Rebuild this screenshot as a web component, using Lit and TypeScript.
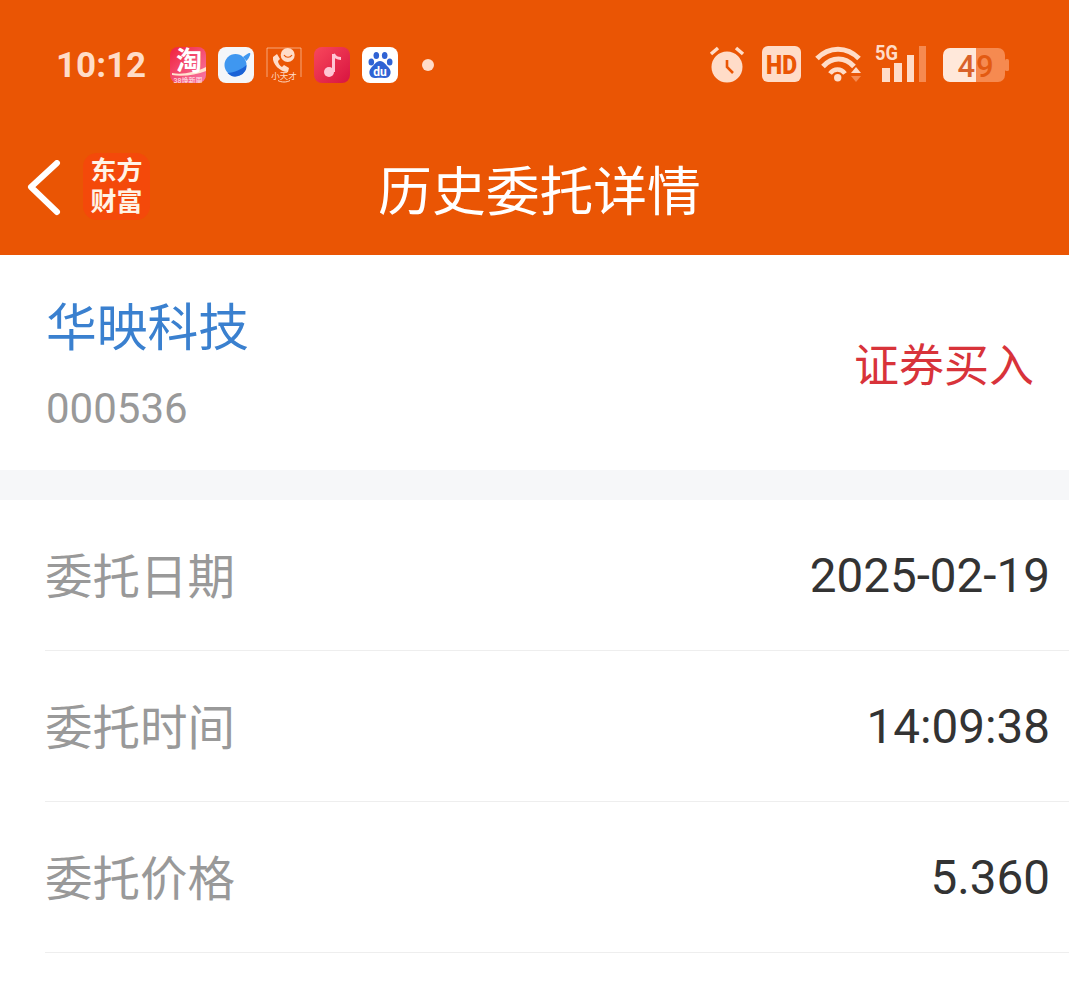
import { css, html, LitElement } from 'lit'
import { customElement } from 'lit/decorators.js'

const rows = [
  { label: '委托日期', value: '2025-02-19' },
  { label: '委托时间', value: '14:09:38' },
  { label: '委托价格', value: '5.360' },
]

@customElement('app-root')
export class AppRoot extends LitElement {
  static styles = css`
    :host {
      display: block;
      width: 1069px;
      height: 995px;
      overflow: hidden;
      background: #fff;
      font-family: Roboto, 'Noto Sans CJK SC', sans-serif;
    }
    .header {
      background: #ea5504;
      height: 255px;
      display: flex;
      flex-direction: column;
    }
    .status {
      height: 130px;
      display: flex;
      align-items: center;
      padding: 0 58px 0 56px;
      color: #ffdcc8;
    }
    .time {
      font-size: 35px;
      font-weight: 700;
      width: 114px;
    }
    .apps {
      display: flex;
      gap: 12px;
      align-items: center;
    }
    .app {
      width: 36px;
      height: 36px;
      display: block;
    }
    .dot {
      width: 12px;
      height: 12px;
      border-radius: 50%;
      background: #ffdcc8;
      margin-left: 24px;
    }
    .sys {
      margin-left: auto;
    }
    .sys svg {
      display: block;
    }
    .sys text {
      font-family: Roboto, sans-serif;
    }
    .nav {
      flex: 1;
      position: relative;
      display: flex;
      align-items: center;
      justify-content: center;
      padding: 0 0 11px 10px;
    }
    .title {
      color: #fff;
      font-size: 53.8px;
    }
    .back {
      position: absolute;
      left: 26px;
      top: 30px;
    }
    .logo {
      position: absolute;
      left: 83px;
      top: 23px;
      width: 67px;
      height: 67px;
      border-radius: 14px;
      background: #f4490a;
      color: #fff3e6;
      font-size: 26px;
      font-weight: 700;
      line-height: 31px;
      display: flex;
      flex-direction: column;
      align-items: center;
      justify-content: center;
    }
    .stock {
      height: 215px;
      display: flex;
      align-items: center;
      justify-content: space-between;
      padding: 0 35px 0 46px;
    }
    .info {
      padding-top: 7px;
    }
    .name {
      font-size: 50.75px;
      line-height: 60px;
      color: #3a80cf;
    }
    .code {
      font-size: 42px;
      line-height: 50px;
      color: #999;
      margin-top: 25px;
    }
    .side {
      font-size: 45px;
      color: #d8333a;
    }
    .gap {
      height: 30px;
      background: #f6f7f9;
    }
    .row {
      height: 150px;
      margin-left: 45px;
      padding-right: 20px;
      display: flex;
      align-items: center;
      justify-content: space-between;
      border-bottom: 1px solid #eeeeee;
    }
    .label {
      font-size: 47.5px;
      color: #999;
      padding-bottom: 4px;
    }
    .value {
      font-size: 47.6px;
      color: #333;
      padding-top: 2px;
      margin-right: -1px;
    }
  `

  render() {
    return html`
      <div class="header">
        <div class="status">
          <span class="time">10:12</span>
          <div class="apps">
            <svg class="app" viewBox="0 0 36 36">
              <defs>
                <linearGradient id="tb" x1="0" y1="0" x2="1" y2="1">
                  <stop offset="0" stop-color="#f0213c" />
                  <stop offset="1" stop-color="#f87aa8" />
                </linearGradient>
              </defs>
              <rect width="36" height="36" rx="8" fill="url(#tb)" />
              <path d="M2 26 C12 28 26 25 36 20 V24 C26 28 12 30 2 28Z" fill="#ffe4d0" />
              <text x="19" y="23" text-anchor="middle" font-size="26" font-weight="700" fill="#fff">淘</text>
              <text x="18" y="35.5" text-anchor="middle" font-size="7" fill="#ffe8ec">38焕新周</text>
            </svg>
            <svg class="app" viewBox="0 0 36 36">
              <rect width="36" height="36" rx="8" fill="#f4f6f9" />
              <circle cx="17.5" cy="18" r="11" fill="#3f97f0" />
              <path d="M9.5 26 A11 11 0 0 0 28.5 18 C 24 22 16 26 9.5 26Z" fill="#1a62d6" />
              <path d="M25 10 C28 7.5 31 5.5 32 6 C33 7 31 11 28.5 14Z" fill="#3f97f0" />
            </svg>
            <svg class="app" viewBox="0 0 36 36" fill="none" stroke="#ffdcc8">
              <path d="M1 30V1H35V30" stroke-width="1" opacity=".6" />
              <path d="M7 10 C6 17 14 25 22 25 L23 21 L18 18 L16 20 C14 19 12 16 12 14 L14 12 L11 7Z" fill="#ffdcc8" stroke="none" />
              <circle cx="21.7" cy="8" r="7" fill="#ffdcc8" stroke="none" />
              <path d="M18 8 C20 11 24 11 26 8" stroke="#ea5504" stroke-width="1.2" />
              <text x="18" y="32" text-anchor="middle" font-size="8.5" fill="#ffdcc8" stroke="none">小天才</text>
              <path d="M12 33.5 C15 35.5 21 35.5 24 33.5" stroke-width="1" />
            </svg>
            <svg class="app" viewBox="0 0 36 36">
              <defs>
                <linearGradient id="mu" x1="0" y1="0" x2="1" y2="1">
                  <stop offset="0" stop-color="#f8475c" />
                  <stop offset="1" stop-color="#d81440" />
                </linearGradient>
              </defs>
              <rect width="36" height="36" rx="8" fill="url(#mu)" />
              <path d="M19.5 7 V25" stroke="#ffc6d4" stroke-width="3" />
              <path d="M19.5 7 C21 10.5 24 11.5 27 11.5" stroke="#ffc6d4" stroke-width="3" fill="none" />
              <circle cx="15" cy="25" r="5" fill="#ffc6d4" />
            </svg>
            <svg class="app" viewBox="0 0 36 36">
              <rect width="36" height="36" rx="8" fill="#fff" />
              <g fill="#2f62d4">
                <ellipse cx="9.3" cy="15" rx="2.8" ry="3.6" />
                <ellipse cx="14.3" cy="8.5" rx="2.8" ry="3.6" />
                <ellipse cx="22.7" cy="8.5" rx="2.8" ry="3.6" />
                <ellipse cx="27.7" cy="15" rx="2.8" ry="3.6" />
                <path d="M18 14 C22 14 24 18 27 21 C31 26 27 32 22 31 C19 30.5 17 30.5 14 31 C9 32 5 26 9 21 C12 18 14 14 18 14Z" />
              </g>
              <text x="18" y="29" text-anchor="middle" font-size="12" font-weight="700" fill="#fff">du</text>
            </svg>
          </div>
          <span class="dot"></span>
          <div class="sys">
            <svg width="302" height="56" viewBox="0 -8 302 56">
              <circle cx="18" cy="22" r="15.5" fill="#ffdcc8" />
              <path d="M2 9 L9 3 M34 9 L27 3" stroke="#ffdcc8" stroke-width="3.5" />
              <path d="M18 15 V22 L24 28" stroke="#ea5504" stroke-width="2.6" fill="none" />

              <rect x="53" y="1" width="39" height="36" rx="6" fill="#ffdcc8" />
              <text x="72.5" y="29" text-anchor="middle" font-size="26" font-weight="900" fill="#ea5504" textLength="31" lengthAdjust="spacingAndGlyphs">HD</text>

              <g fill="none" stroke="#ffdcc8" stroke-width="5">
                <path d="M108 13.5 C120 1 138 1 150 13.5" />
                <path d="M114 21.5 C123 11.5 136 11.5 145 21.5" />
                <path d="M121 28.5 C125 23 132 23 136 28.5" stroke-width="4.5" />
              </g>
              <circle cx="128.7" cy="32.7" r="3.7" fill="#ffdcc8" />
              <path d="M142 28 L147 22 L152 28Z" fill="#ffdcc8" />
              <path d="M142 31 L147 37 L152 31Z" fill="#f68a50" />

              <text x="166" y="15" font-size="20" font-weight="700" fill="#ffdcc8" textLength="23" lengthAdjust="spacingAndGlyphs">5G</text>
              <rect x="173" y="23" width="8" height="14" fill="#ffdcc8" />
              <rect x="185" y="18" width="8" height="19" fill="#ffdcc8" />
              <rect x="198" y="10" width="7" height="27" fill="#ffdcc8" />
              <rect x="210" y="1" width="7" height="36" fill="#f68a50" />

              <path d="M241 3 H267 V37 H241 A7 7 0 0 1 234 30 V10 A7 7 0 0 1 241 3Z" fill="#ffe8da" />
              <path d="M267 3 H289 A7 7 0 0 1 296 10 V30 A7 7 0 0 1 289 37 H267Z" fill="#f68a50" />
              <rect x="296" y="14" width="4" height="12" rx="1.5" fill="#f68a50" />
              <text x="266" y="32" text-anchor="end" font-size="31" font-weight="500" fill="#d9622a">4</text>
              <text x="267" y="32" font-size="31" font-weight="500" fill="#e35a12">9</text>
            </svg>
          </div>
        </div>
        <div class="nav">
          <svg class="back" width="36" height="56" viewBox="0 0 36 56" fill="none">
            <path d="M31 3 L5 27 L31 52" stroke="#fff" stroke-width="6" stroke-linecap="round" stroke-linejoin="round" />
          </svg>
          <div class="logo"><span>东方</span><span>财富</span></div>
          <span class="title">历史委托详情</span>
        </div>
      </div>

      <div class="stock">
        <div class="info">
          <div class="name">华映科技</div>
          <div class="code">000536</div>
        </div>
        <div class="side">证券买入</div>
      </div>
      <div class="gap"></div>
      ${rows.map(
        (r) => html`<div class="row">
          <span class="label">${r.label}</span>
          <span class="value">${r.value}</span>
        </div>`,
      )}
    `
  }
}
